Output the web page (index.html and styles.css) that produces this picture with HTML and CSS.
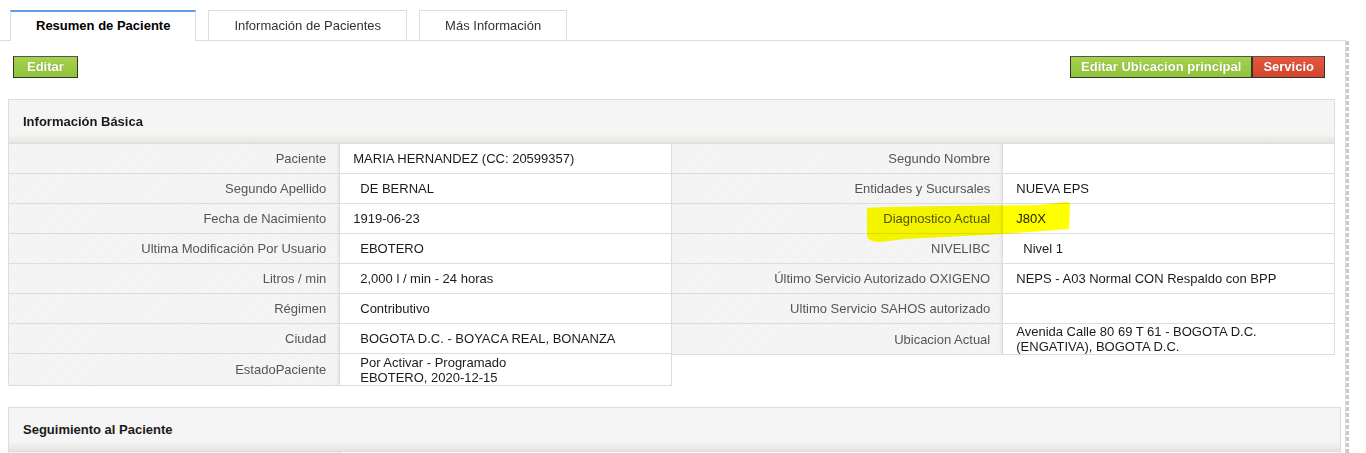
FILE: index.html
```html
<!DOCTYPE html>
<html lang="es">
<head>
<meta charset="utf-8">
<title>Resumen de Paciente</title>
<link rel="stylesheet" href="styles.css">
</head>
<body>
<div class="layout">
  <div class="main">
    <ul class="tabs">
      <li class="tab active">Resumen de Paciente</li>
      <li class="tab">Información de Pacientes</li>
      <li class="tab">Más Información</li>
    </ul>
    <div class="tab-content">
      <div class="toolbar">
        <button class="btn btn-green btn-wide">Editar</button>
        <div class="btn-group">
          <button class="btn btn-green">Editar Ubicacion principal</button>
          <button class="btn btn-red">Servicio</button>
        </div>
      </div>

      <section class="panel panel-basic">
        <div class="panel-head">Información Básica</div>
        <div class="info-grid">
          <table class="info">
            <tr><td class="lbl">Paciente</td><td class="val">MARIA HERNANDEZ (CC: 20599357)</td></tr>
            <tr><td class="lbl">Segundo Apellido</td><td class="val ind">DE BERNAL</td></tr>
            <tr><td class="lbl">Fecha de Nacimiento</td><td class="val">1919-06-23</td></tr>
            <tr><td class="lbl">Ultima Modificación Por Usuario</td><td class="val ind">EBOTERO</td></tr>
            <tr><td class="lbl">Litros / min</td><td class="val ind">2,000 l / min - 24 horas</td></tr>
            <tr><td class="lbl">Régimen</td><td class="val ind">Contributivo</td></tr>
            <tr><td class="lbl">Ciudad</td><td class="val ind">BOGOTA D.C. - BOYACA REAL, BONANZA</td></tr>
            <tr><td class="lbl">EstadoPaciente</td><td class="val ind multi">Por Activar - Programado<br>EBOTERO, 2020-12-15</td></tr>
          </table>
          <table class="info info-right">
            <tr><td class="lbl">Segundo Nombre</td><td class="val"></td></tr>
            <tr><td class="lbl">Entidades y Sucursales</td><td class="val">NUEVA EPS</td></tr>
            <tr><td class="lbl">Diagnostico Actual</td><td class="val">J80X</td></tr>
            <tr><td class="lbl">NIVELIBC</td><td class="val ind">Nivel 1</td></tr>
            <tr><td class="lbl">Último Servicio Autorizado OXIGENO</td><td class="val">NEPS - A03 Normal CON Respaldo con BPP</td></tr>
            <tr><td class="lbl">Ultimo Servicio SAHOS autorizado</td><td class="val"></td></tr>
            <tr><td class="lbl">Ubicacion Actual</td><td class="val">Avenida Calle 80 69 T 61 - BOGOTA D.C.<br>(ENGATIVA), BOGOTA D.C.</td></tr>
          </table>
        </div>
        <svg class="marker" width="212" height="46" viewBox="0 0 212 46" aria-hidden="true">
          <path d="M5,10 C40,8 120,8 178,7 L205,4 Q208,4 208,8 L207,31 L142,36 L43,41 L18,44 Q6,44 5,38 Z" fill="#ffff00"/>
        </svg>
      </section>

      <section class="panel panel-follow">
        <div class="panel-head">Seguimiento al Paciente</div>
        <table class="info info-full">
          <tr><td class="lbl lbl-narrow"></td><td class="val"></td></tr>
        </table>
      </section>
    </div>
  </div>
  <div class="splitter"></div>
</div>
</body>
</html>
```

FILE: styles.css
```css
* { box-sizing: border-box; }

body {
  margin: 0;
  font-family: "Liberation Sans", Arial, sans-serif;
  font-size: 13px;
  color: #222;
  background: #fff;
  overflow: hidden;
}

.layout {
  display: flex;
  align-items: stretch;
  height: 453px;
  overflow: hidden;
}

.main {
  width: 1346px;
  flex: none;
}

.splitter {
  width: 3px;
  margin-top: 41px;
  background: repeating-linear-gradient(to bottom, #c8c8c8 0 4px, transparent 4px 6px);
}

/* Tabs */
.tabs {
  list-style: none;
  margin: 0;
  padding: 10px 0 0 10px;
  display: flex;
  align-items: flex-start;
  gap: 12px;
  height: 40px;
}

.tab {
  height: 30px;
  padding: 0 25px;
  border: 1px solid #dddddd;
  border-bottom: none;
  background: #fff;
  color: #333;
  line-height: 29px;
  white-space: nowrap;
}

.tab.active {
  height: 31px;
  border-top: 2px solid #5e9fe2;
  line-height: 27px;
  font-weight: bold;
  color: #000;
  position: relative;
  z-index: 1;
}

.tab-content {
  border-top: 1px solid #dddddd;
  border-right: 1px solid #dddddd;
  padding: 15px 4px 0 8px;
  min-height: 413px;
}

/* Toolbar & buttons */
.toolbar {
  display: flex;
  justify-content: space-between;
  padding: 0 16px 0 5px;
}

.btn-group {
  display: flex;
}

.btn {
  height: 22px;
  padding: 0 10px;
  border: 1px solid #333;
  border-top-color: #555;
  font-family: "Liberation Sans", Arial, sans-serif;
  font-size: 13px;
  font-weight: bold;
  color: #fff;
  line-height: 20px;
  text-shadow: 0 0 1px rgba(0, 0, 0, 0.25);
  cursor: pointer;
}

.btn-wide {
  padding: 0 13px;
}

.btn-green {
  background: linear-gradient(to bottom, #a5d24b, #8fc33a);
}

.btn-red {
  background: linear-gradient(to bottom, #e4573c, #d4462c);
}

/* Panels */
.panel {
  position: relative;
  margin-top: 21px;
}

.panel-basic {
  margin-right: 6px;
}

.panel-follow {
  margin-top: 21px;
}

.panel-head {
  height: 44px;
  border: 1px solid #dddddd;
  border-bottom: none;
  padding-left: 14px;
  line-height: 43px;
  font-weight: bold;
  color: #1a1a1a;
  background: linear-gradient(to bottom, #f5f5f5 0, #f5f5f5 calc(100% - 9px), #e4e4df 100%);
}

.info-grid {
  display: flex;
  align-items: flex-start;
}

.info {
  width: 50%;
  border-collapse: collapse;
  table-layout: fixed;
}

.info-right {
  margin-left: -1px;
  width: calc(50% + 1px);
}

.info-full {
  width: 100%;
}

.info td {
  border: 1px solid #dddddd;
  height: 30px;
  padding: 0 12px 0 13px;
  line-height: 15px;
  vertical-align: middle;
}

.lbl {
  width: 50%;
  text-align: right;
  color: #555;
  padding-right: 13px !important;
  background: repeating-linear-gradient(-45deg, #f5f5f5 0 3px, #f1f1f1 3px 4px);
  box-shadow: inset -3px 0 3px -2px #e2e2e2;
}

.info-right .lbl {
  padding-right: 12px !important;
}

.lbl-narrow {
  width: 332px;
}

.val {
  color: #1b1b1b;
  background: #fff;
}

.info td.val.ind {
  padding-left: 20px;
}

.info td.val.multi {
  height: 31px;
  padding-top: 1px;
  padding-bottom: 0;
}

.marker {
  position: absolute;
  left: 854px;
  top: 99px;
  mix-blend-mode: multiply;
  pointer-events: none;
}
```
